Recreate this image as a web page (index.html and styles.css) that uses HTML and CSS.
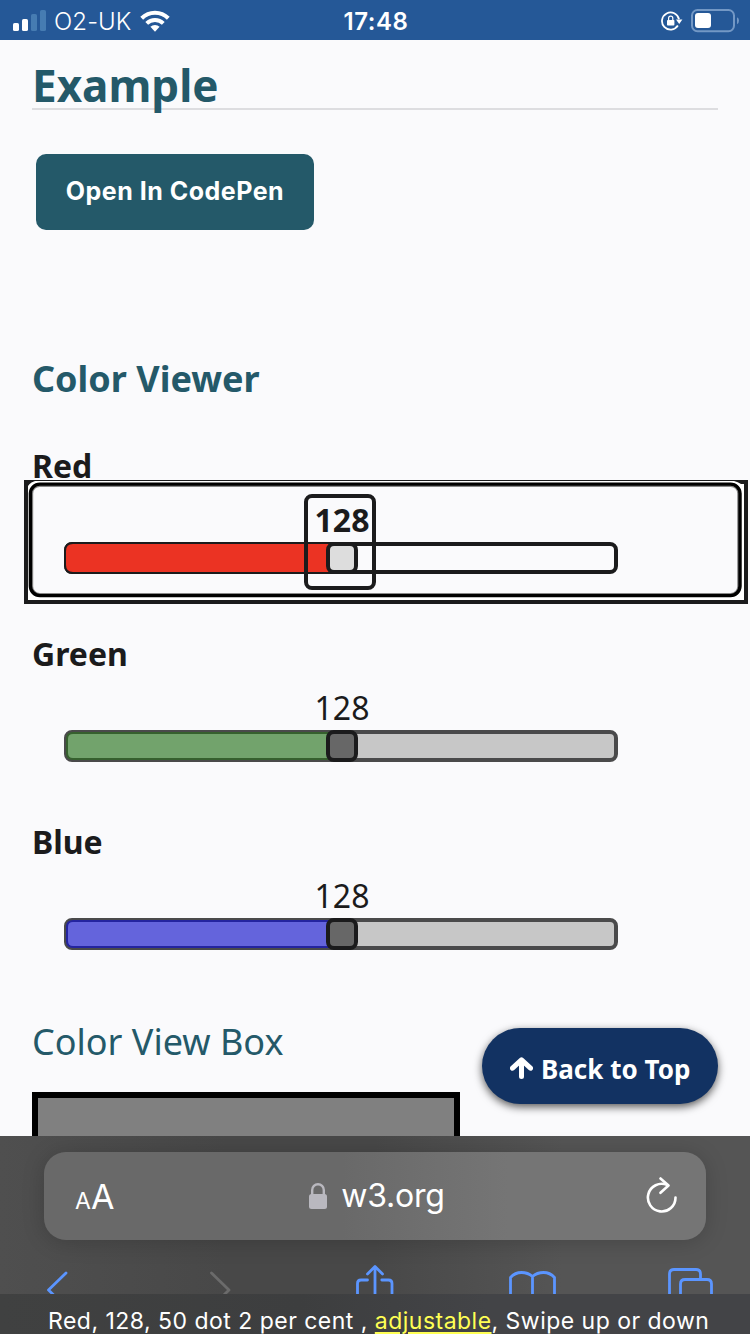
FILE: index.html
```html
<!DOCTYPE html>
<html lang="en">
<head>
<meta charset="utf-8">
<title>Color Viewer Slider Example</title>
<link rel="stylesheet" href="styles.css">
</head>
<body>
<div class="screen">
  <header class="status">
    <div class="status-left">
      <svg width="34" height="22" viewBox="0 0 34 22"><g fill="#fff"><rect x="0" y="13" width="6" height="8" rx="1.6"/><rect x="9" y="9" width="6" height="12" rx="1.6"/></g><g fill="#467cb2"><rect x="18" y="4" width="6" height="17" rx="1.6"/><rect x="27" y="0" width="6" height="21" rx="1.6"/></g></svg>
      <span class="carrier">O2-UK</span>
      <svg class="wifi" width="30" height="23" viewBox="0 0 30 23"><g fill="none" stroke="#fff" stroke-width="4"><path d="M1.7 8.2a19 19 0 0 1 26.600 0"/><path d="M6.700 13.400a12 12 0 0 1 16.600 0"/></g><path d="M10.400 16.800a6.500 6.500 0 0 1 9.200 0L15 21.800z" fill="#fff"/></svg>
    </div>
    <span class="clock">17:48</span>
    <div class="status-right">
      <svg width="22" height="20" viewBox="0 0 22 20"><path d="M16.9 14.6A8.6 8.6 0 1 1 18 8.2" fill="none" stroke="#fff" stroke-width="1.8"/><path d="M15 8.4h6.4L18.2 13z" fill="#fff"/><rect x="6" y="9" width="7.4" height="5.6" rx=".8" fill="#fff"/><path d="M7.6 9.4V7.3a2.1 2.1 0 0 1 4.2 0v2.1" fill="none" stroke="#fff" stroke-width="1.2"/></svg>
      <svg width="48" height="24" viewBox="0 0 48 24"><rect x="1" y="1" width="42" height="21.2" rx="5.5" fill="none" stroke="#7398c5" stroke-width="2"/><rect x="4" y="4" width="16" height="15" rx="3" fill="#fff"/><path d="M46 8.2q2 .8 2 3.4t-2 3.6z" fill="#7398c5"/></svg>
    </div>
  </header>

  <main class="page">
    <h1 class="title">Example</h1>
    <button class="codepen">Open In CodePen</button>
    <h2 class="viewer">Color Viewer</h2>

    <section class="slider">
      <h3 class="label">Red</h3>
      <svg class="rail" width="724" height="124" viewBox="24 480 724 124">
        <rect x="24" y="480" width="724" height="124" fill="#1b1b1c"/>
        <rect x="28" y="481" width="716" height="119" fill="#fff"/>
        <path d="M24 480H38Q30 482 28 486V484H24zM730 480H748V484H741Q738 482 734 481z" fill="#1b1b1c"/>
        <rect x="31.2" y="484.9" width="708" height="110" rx="8.5" fill="#fafafc" stroke="#888" stroke-width="4"/>
        <rect x="30.4" y="484.1" width="709.6" height="111.5" rx="9.5" fill="none" stroke="#000" stroke-width="3.4"/>
        <rect x="66" y="544" width="550" height="28" rx="6" fill="#fafafc" stroke="#1b1b1c" stroke-width="4"/>
        <path d="M342 543H73q-8 0-8 8v14q0 8 8 8H342z" fill="#eb3323" stroke="#1b1b1c" stroke-width="2"/>
        <rect x="328" y="544" width="28" height="28" rx="6" fill="#ddd" stroke="#1b1b1c" stroke-width="4"/>
        <rect x="306" y="496" width="68" height="92" rx="6" fill="none" stroke="#1b1b1c" stroke-width="4"/>
        <text class="value strong" x="342" y="532">128</text>
      </svg>
    </section>

    <section class="slider">
      <h3 class="label">Green</h3>
      <svg class="rail" width="724" height="124" viewBox="24 480 724 124">
        <rect x="66" y="544" width="550" height="28" rx="6" fill="#c7c7c7" stroke="#4a4a4b" stroke-width="4"/>
        <path d="M342 545H73q-6 0-6 6v14q0 6 6 6H342" fill="#72a36c" stroke="#36602e" stroke-width="2"/>
        <rect x="328" y="544" width="28" height="28" rx="6" fill="#676767" stroke="#1b1b1c" stroke-width="4"/>
        <text class="value" x="342" y="532">128</text>
      </svg>
    </section>

    <section class="slider">
      <h3 class="label">Blue</h3>
      <svg class="rail" width="724" height="124" viewBox="24 480 724 124">
        <rect x="66" y="544" width="550" height="28" rx="6" fill="#c7c7c7" stroke="#4a4a4b" stroke-width="4"/>
        <path d="M342 545H73q-6 0-6 6v14q0 6 6 6H342" fill="#6464dc" stroke="#2424a0" stroke-width="2"/>
        <rect x="328" y="544" width="28" height="28" rx="6" fill="#676767" stroke="#1b1b1c" stroke-width="4"/>
        <text class="value" x="342" y="532">128</text>
      </svg>
    </section>

    <h2 class="boxtitle">Color View Box</h2>
    <div class="colorbox"></div>
    <a class="totop"><svg width="23" height="23" viewBox="0 0 23 23"><path d="M2.5 11.2L11.5 2.800L20.5 11.2M11.5 4V19.500" fill="none" stroke="#fff" stroke-width="5" stroke-linecap="round" stroke-linejoin="round"/></svg><span class="totop-text">Back to Top</span></a>
  </main>

  <footer class="browser">
    <div class="address">
      <span class="aa"><span class="aa-small">A</span>A</span>
      <div class="site">
        <svg width="18" height="26" viewBox="0 0 18 26"><rect y="11" width="18" height="15" rx="2.5" fill="#b9b8bf"/><path d="M3.2 12V7a5.8 5.8 0 0 1 11.6 0v5" fill="none" stroke="#b9b8bf" stroke-width="2.4"/></svg>
        <span class="host">w3.org</span>
      </div>
      <svg class="reload" width="32" height="38" viewBox="0 0 32 38"><g fill="none" stroke="#fff" stroke-width="2.6" stroke-linecap="round" stroke-linejoin="round"><path d="M29.5 20.500A13.800 13.800 0 1 1 21 7.900"/><path d="M14.500 1.500L22.500 8.500L14.500 15.800"/></g></svg>
    </div>
    <svg class="tools" width="750" height="34" viewBox="0 1260 750 34"><g fill="none" stroke="#5b95ff" stroke-width="2.8" stroke-linecap="round" stroke-linejoin="round">
      <path d="M66 1273L48.5 1290L66 1307"/>
      <path stroke="#6b6b6b" d="M211.5 1273L229 1290L211.5 1307"/>
      <path d="M367.5 1280H361q-3.5 0-3.5 3.5V1300M381.8 1280H388.5q3.5 0 3.5 3.5V1300M375 1300V1267M367.5 1274L375 1266.5L382.5 1274"/>
      <path d="M532.5 1300V1276.5Q528 1272.5 521.5 1272.5T510.5 1277.5V1300M532.5 1276.5Q537 1272.5 543.5 1272.5T554.5 1277.5V1300"/>
      <path d="M669.5 1300V1274q0-4.5 4.500-4.500H696q4.500 0 4.500 4.500V1278M680.500 1300V1284q0-4.500 4.500-4.500H707q4.500 0 4.500 4.500V1300"/>
    </g></svg>
    <p class="caption">Red, 128, 50 dot 2 per cent , <span class="hint">adjustable</span>, Swipe up or down</p>
  </footer>
</div>
</body>
</html>
```
FILE: styles.css
```css
* { box-sizing: border-box; margin: 0; padding: 0; }
body { margin: 0; background: #fafafc; }
svg { display: block; flex: none; }
.screen { width: 750px; height: 1334px; display: flex; flex-direction: column; overflow: hidden; background: #fafafc; color: #1b1b1c; font-family: "Noto Sans", sans-serif; }

.status { height: 40px; flex: none; background: #255897; color: #fff; display: grid; grid-template-columns: 1fr auto 1fr; align-items: center; padding: 0 11px 0 13px; font: 24px/40px Inter, sans-serif; }
.status-left { display: flex; align-items: center; }
.carrier { margin-left: 7px; padding-top: 1px; font-weight: 300; letter-spacing: .1px; }
.wifi { margin-left: 8px; }
.clock { padding-top: 2px; font-weight: 600; letter-spacing: .6px; }
.status-right { display: flex; justify-content: flex-end; align-items: center; gap: 8px; }

.page { position: relative; height: 1096px; flex: none; overflow: hidden; padding: 0 32px; }
.title { margin-top: 12px; height: 58px; border-bottom: 2px solid #dddde0; font-size: 44px; line-height: 66px; color: #245969; }
.codepen { display: block; width: 278px; height: 76px; margin: 44px 0 0 4px; border: 0; border-radius: 10px; background: #245969; color: #fff; font: 700 25px/72px Inter, sans-serif; letter-spacing: .5px; padding-bottom: 2px; }
.viewer { margin-top: 122px; height: 88px; font-size: 36px; line-height: 54px; color: #245969; }
.slider { height: 188px; }
.label { height: 40px; padding-top: 10px; font-size: 32px; line-height: 32px; }
.rail { margin-left: -8px; }
.value { font-size: 32px; text-anchor: middle; fill: #1b1b1c; }
.strong { font-weight: 700; }
.boxtitle { margin-top: 10px; height: 78px; font-size: 36px; line-height: 56px; font-weight: 400; color: #245969; }
.colorbox { width: 428px; height: 80px; border: 6px solid #000; background: #808080; }
.totop { position: absolute; left: 482px; top: 988px; width: 236px; height: 76px; border-radius: 38px; background: #123262; box-shadow: 0 3px 8px rgba(0, 0, 0, .65); color: #fff; display: flex; align-items: center; padding: 5px 0 0 28px; gap: 8px; font-size: 26px; font-weight: 700; }

.browser { height: 198px; flex: none; padding-top: 16px; background: linear-gradient(90deg, #4f4f4f, #484848 30%, #484848 50%, #555 75%, #555); color: #fff; }
.address { width: 662px; height: 88px; margin: 0 auto; border-radius: 22px; background: linear-gradient(90deg, #696969 45%, #757575 70%); box-shadow: 0 2px 22px rgba(0, 0, 0, .18); display: grid; grid-template-columns: 1fr auto 1fr; align-items: center; padding: 0 28px 0 31px; font: 33px/40px Inter, sans-serif; }
.aa { padding-top: 5px; font-size: 34px; }
.aa-small { font-size: 23px; }
.site { display: flex; align-items: center; gap: 14px; padding-left: 1px; }
.host { font-size: 32px; letter-spacing: -.2px; }
.reload { justify-self: end; }
.tools { margin-top: 20px; }
.caption { height: 40px; padding-left: 48px; background: linear-gradient(90deg, #404141, #3d3e3f 40%, #434447 65%); font: 23px/54px Inter, sans-serif; white-space: nowrap; letter-spacing: .48px; }
.hint { color: #ffff54; text-decoration: underline; text-decoration-thickness: 2px; text-underline-offset: 3px; }
```
